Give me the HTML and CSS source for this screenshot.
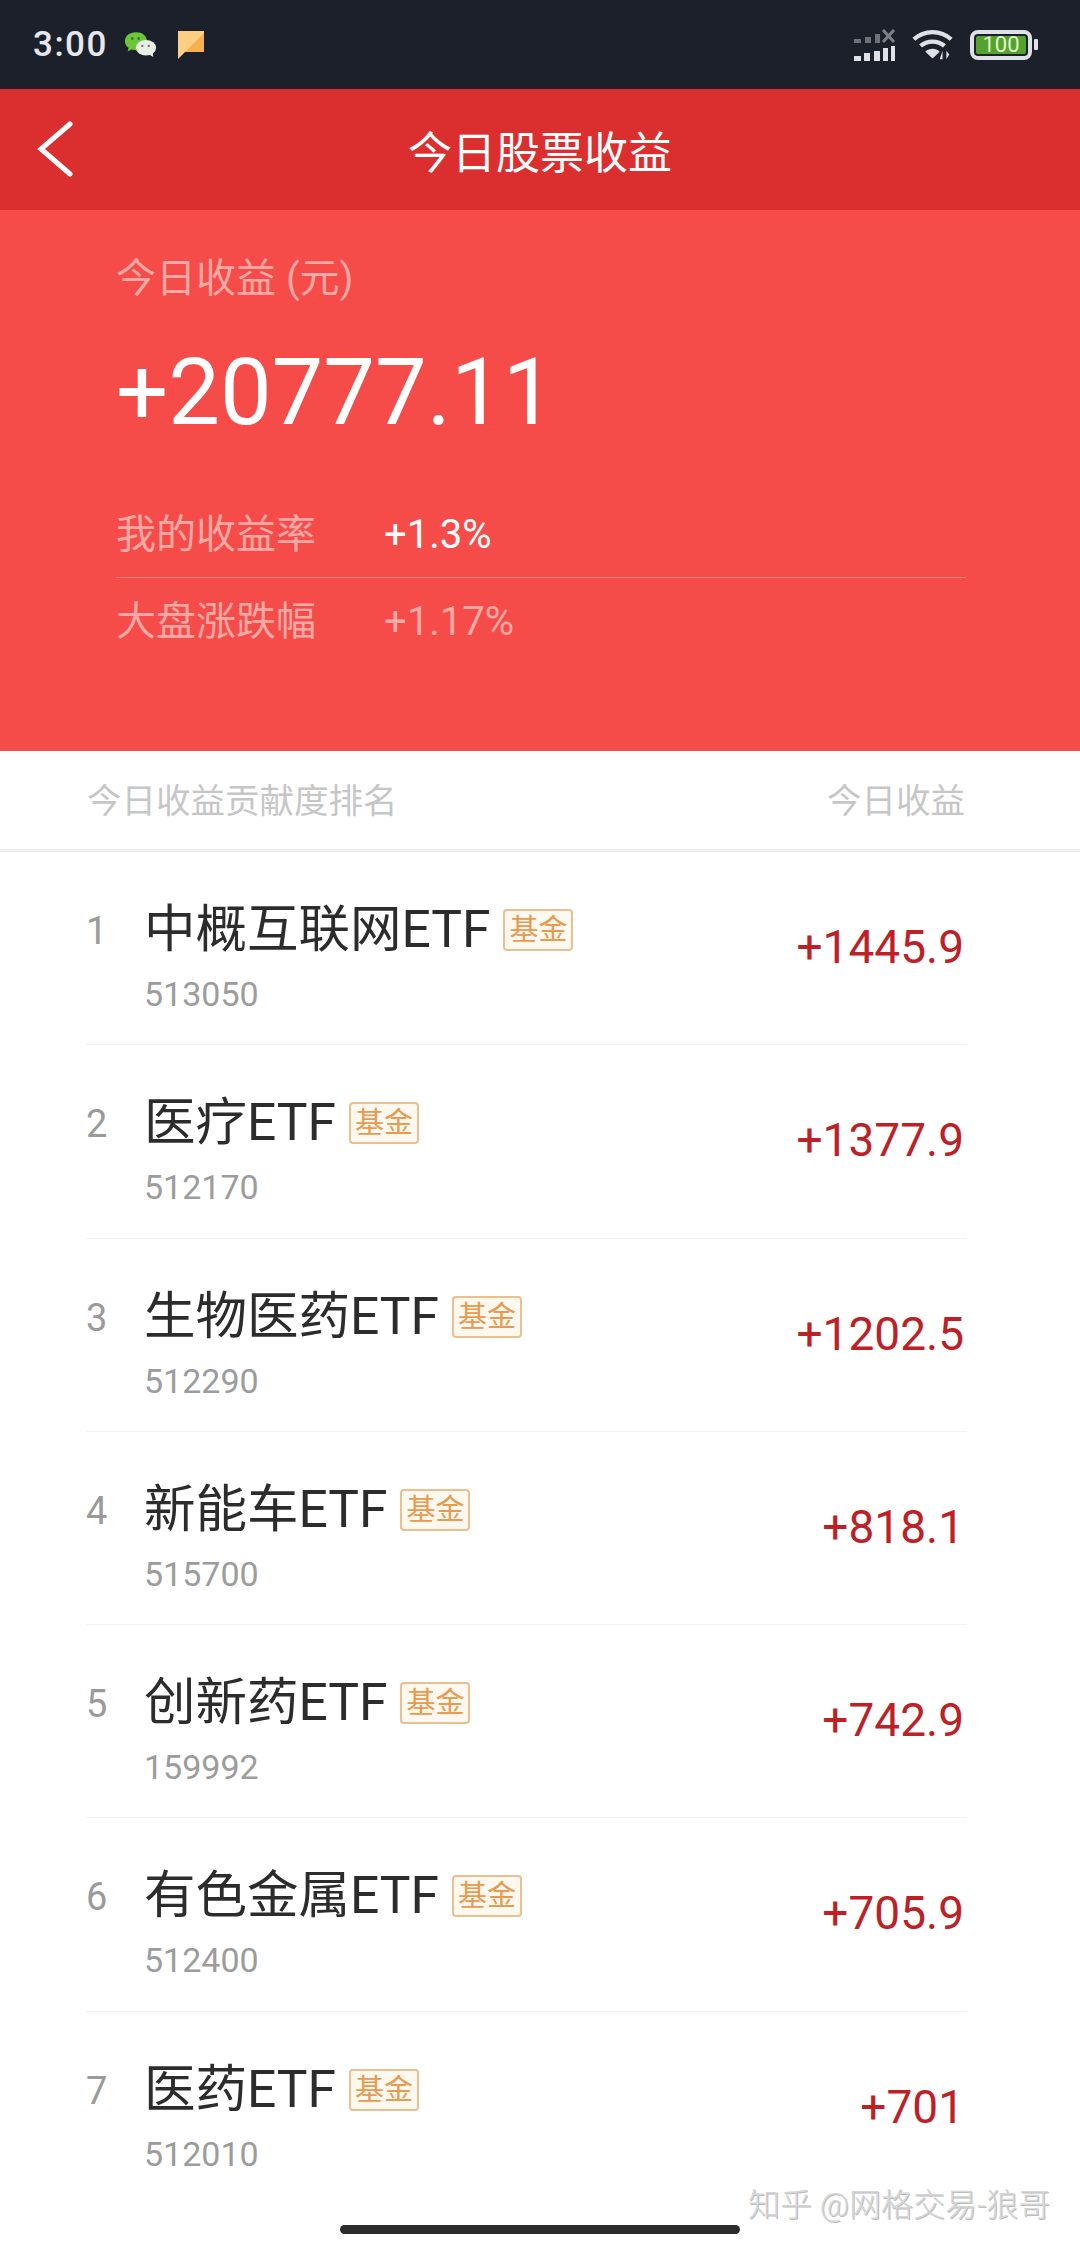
FILE: index.html
```html
<!DOCTYPE html>
<html lang="zh-CN">
<head>
<meta charset="utf-8">
<title>今日股票收益</title>
<link rel="stylesheet" href="styles.css">
</head>
<body>
<div class="page">
  <div class="status">
    <div class="status-left">
      <span class="time">3:00</span>
      <svg class="ic-wechat" width="33" height="28" viewBox="0 0 36 30"><path d="M13 1C6 1 1 5 1 11c0 3 2 6 4 7l-1 4 4-2c2 .6 3 .7 5 .7 7 0 12-4 12-10S20 1 13 1z" fill="#6cc63c"/><ellipse cx="24" cy="18" rx="11" ry="8.500" fill="#e9efe4"/><path d="M27 25l5 3-1-6z" fill="#e9efe4"/><circle cx="9" cy="8" r="1.400" fill="#2d6a1c"/><circle cx="16" cy="8" r="1.400" fill="#2d6a1c"/><circle cx="20" cy="16" r="1.300" fill="#777"/><circle cx="27" cy="16" r="1.300" fill="#777"/></svg>
      <svg class="ic-note" width="26" height="28" viewBox="0 0 26 28"><path d="M0 0h26v21H7l-7 7z" fill="#fdcf85"/><path d="M26 2v19H7z" fill="#f6b04c"/></svg>
    </div>
    <div class="status-right">
      <svg class="ic-signal" width="42" height="32" viewBox="0 0 42 32"><g fill="#6f7279"><rect x="0" y="10" width="7" height="4"/><rect x="11" y="8" width="6" height="6"/><rect x="21" y="5" width="5" height="9"/></g><path d="M29 1l11 12M40 1L29 13" stroke="#7d8087" stroke-width="3" fill="none"/><g fill="#dfe1e6"><rect x="0" y="27" width="7" height="5"/><rect x="10" y="24" width="6" height="8"/><rect x="20" y="22" width="6" height="10"/><rect x="29" y="19" width="5" height="13"/><rect x="37" y="17" width="4" height="15"/></g></svg>
      <svg class="ic-wifi" width="44" height="34" viewBox="0 0 46 34"><g fill="none" stroke="#dfe1e6" stroke-width="4.500"><path d="M3 11c11-10 28-10 39 0"/><path d="M10 18c7-6 18-6 25 0"/></g><path d="M15 24c4-4 11-4 15 0l-7.500 7z" fill="#dfe1e6"/><path d="M33 32v-9l-3 9zM37 23v9l3-5z" fill="#dfe1e6"/></svg>
      <div class="battery"><div class="battery-body"><span class="battery-fill">100</span></div><span class="battery-cap"></span></div>
    </div>
  </div>

  <div class="nav">
    <svg class="back" width="36" height="56" viewBox="0 0 36 56"><path d="M33 3L4 28l29 25" fill="none" stroke="#fff" stroke-width="5" stroke-linecap="round" stroke-linejoin="miter"/></svg>
    <h1 class="nav-title">今日股票收益</h1>
  </div>

  <section class="hero">
    <div class="hero-label">今日收益 (元)</div>
    <div class="hero-amount">+20777.11</div>
    <div class="hero-stats">
      <div class="stat stat-line">
        <span class="stat-name">我的收益率</span>
        <span class="stat-value">+1.3%</span>
      </div>
      <div class="stat">
        <span class="stat-name">大盘涨跌幅</span>
        <span class="stat-value dim">+1.17%</span>
      </div>
    </div>
  </section>

  <div class="thead">
    <span>今日收益贡献度排名</span>
    <span>今日收益</span>
  </div>

  <ul class="list">
    <li class="row"><span class="rank">1</span><div class="info"><div class="name-line"><span class="name">中概互联网ETF</span><span class="tag">基金</span></div><div class="code">513050</div></div><span class="gain">+1445.9</span></li>
    <li class="row"><span class="rank">2</span><div class="info"><div class="name-line"><span class="name">医疗ETF</span><span class="tag">基金</span></div><div class="code">512170</div></div><span class="gain">+1377.9</span></li>
    <li class="row"><span class="rank">3</span><div class="info"><div class="name-line"><span class="name">生物医药ETF</span><span class="tag">基金</span></div><div class="code">512290</div></div><span class="gain">+1202.5</span></li>
    <li class="row"><span class="rank">4</span><div class="info"><div class="name-line"><span class="name">新能车ETF</span><span class="tag">基金</span></div><div class="code">515700</div></div><span class="gain">+818.1</span></li>
    <li class="row"><span class="rank">5</span><div class="info"><div class="name-line"><span class="name">创新药ETF</span><span class="tag">基金</span></div><div class="code">159992</div></div><span class="gain">+742.9</span></li>
    <li class="row"><span class="rank">6</span><div class="info"><div class="name-line"><span class="name">有色金属ETF</span><span class="tag">基金</span></div><div class="code">512400</div></div><span class="gain">+705.9</span></li>
    <li class="row"><span class="rank">7</span><div class="info"><div class="name-line"><span class="name">医药ETF</span><span class="tag">基金</span></div><div class="code">512010</div></div><span class="gain">+701</span></li>
  </ul>

  <div class="watermark">知乎 @网格交易-狼哥</div>
  <div class="home-bar"></div>
</div>
</body>
</html>
```

FILE: styles.css
```css
* { box-sizing: border-box; }
html, body { margin: 0; padding: 0; }
body { background: #fff; font-family: Roboto, "Noto Sans CJK SC", sans-serif; }
.page { position: relative; width: 1080px; height: 2248px; overflow: hidden; background: #fff; }

.status { height: 89px; background: #1c202b; display: flex; justify-content: space-between; align-items: center; padding: 0 42px 0 33px; }
.status-left, .status-right { display: flex; align-items: center; }
.time { color: #e6e8ee; font-size: 35px; font-weight: 500; letter-spacing: 1.500px; width: 91px; }
.ic-note { margin-left: 21px; }
.ic-wifi { margin-left: 15px; }
.battery { display: flex; align-items: center; margin-left: 15px; }
.battery-body { width: 62px; height: 30px; border: 4px solid #dfe1e6; border-radius: 8px; padding: 2px; background: #1c202b; }
.battery-fill { display: block; height: 18px; background: #55a32d; border-radius: 2px; color: #dff5cf; font-size: 22px; line-height: 18px; text-align: center; }
.battery-cap { width: 4px; height: 11px; margin-left: 2px; background: #dfe1e6; border-radius: 1px; }

.nav { position: relative; height: 121px; background: #db2f2f; display: flex; align-items: center; justify-content: center; }
.back { position: absolute; left: 37px; top: 32px; }
.nav-title { margin: 0; color: #fff; font-size: 44px; font-weight: 400; }

.hero { height: 541px; background: #f64c49; padding: 0 114px 0 116px; display: flex; flex-direction: column; }
.hero-label { margin-top: 43px; color: #fca9a5; font-size: 40px; line-height: 52px; }
.hero-amount { margin-top: 34px; color: #fff; font-size: 92px; line-height: 108px; }
.hero-stats { margin-top: 45px; }
.stat { display: flex; align-items: center; height: 86px; }
.stat-line { border-bottom: 1px solid #fb8480; }
.stat-name { width: 268px; margin-bottom: 7px; color: #fca9a5; font-size: 40px; }
.stat-value { color: #fff; font-size: 40px; }
.stat-value.dim { color: #fca9a5; }

.thead { height: 101px; display: flex; justify-content: space-between; align-items: center; padding: 0 115px 5px 87px; border-bottom: 3px solid #ececec; color: #c6c6c6; font-size: 34.500px; }

.list { margin: 0; padding: 0 113px 0 86px; list-style: none; }
.row { height: 193.300px; display: flex; align-items: flex-start; border-bottom: 1px solid #f1f1f1; }
.row:last-child { border-bottom: 0; }
.rank { width: 58px; margin-top: 56px; color: #9a9a9a; font-size: 38px; line-height: 46px; }
.info { flex: 1; padding-top: 47px; }
.name-line { display: flex; align-items: center; height: 62px; }
.name { color: #2c2c2c; font-size: 51.500px; line-height: 62px; }
.tag { margin-left: 13px; width: 70px; height: 42px; border: 2px solid #e9c08e; border-radius: 4px; background: #fff8ee; color: #e79a50; font-size: 29px; line-height: 38px; text-align: center; }
.code { margin-top: 10px; color: #9c9c9c; font-size: 34px; line-height: 46px; }
.gain { margin: 67px 3px 0 0; color: #bd2127; font-size: 46px; line-height: 56px; }

.watermark { position: absolute; left: 748px; top: 2185px; color: #d6d6d6; font-size: 32px; line-height: 40px; font-weight: 300; text-shadow: 1px 1px 0 #bdbdbd; }
.home-bar { position: absolute; left: 340px; top: 2225px; width: 400px; height: 9px; border-radius: 5px; background: #2b2b2b; }
```
